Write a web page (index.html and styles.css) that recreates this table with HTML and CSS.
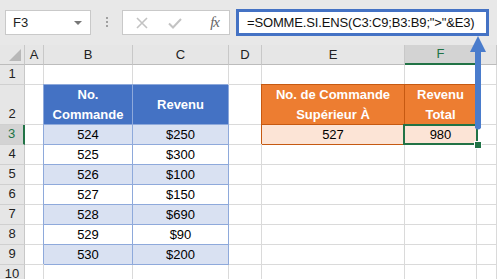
FILE: index.html
```html
<!DOCTYPE html>
<html>
<head>
<meta charset="utf-8">
<link rel="stylesheet" href="styles.css">
</head>
<body>
<div class="app">
  <div class="toolbar">
    <div class="namebox"><span class="nb-text">F3</span><span class="nb-arrow"></span></div>
    <div class="dots"><i></i><i></i><i></i></div>
    <div class="fxbox">
      <svg class="ico" width="14" height="14" viewBox="0 0 14 14"><path d="M2 2 L12 12 M12 2 L2 12" stroke="#c3c3c3" stroke-width="1.6" fill="none"/></svg>
      <svg class="ico" width="16" height="14" viewBox="0 0 16 14"><path d="M2 7.5 L6 11.5 L14 3" stroke="#c3c3c3" stroke-width="2" fill="none"/></svg>
      <span class="fx">fx</span>
    </div>
    <div class="formula">=SOMME.SI.ENS(C3:C9;B3:B9;"&gt;"&amp;E3)</div>
  </div>
  <div class="sheet">
    <div class="c h corner"><span class="tri"></span></div>
    <div class="c h">A</div><div class="c h">B</div><div class="c h">C</div><div class="c h">D</div><div class="c h">E</div><div class="c h hsel">F</div><div class="c h"></div>

    <div class="c rh">1</div><div class="c"></div><div class="c"></div><div class="c"></div><div class="c"></div><div class="c"></div><div class="c"></div><div class="c"></div>

    <div class="c rh">2</div><div class="c"></div>
    <div class="c bt bh">No.<br>Commande</div><div class="c bt bh">Revenu</div>
    <div class="c"></div>
    <div class="c ot oh">No. de Commande<br>Supérieur À</div><div class="c ot oh">Revenu<br>Total</div>
    <div class="c"></div>

    <div class="c rh rsel">3</div><div class="c"></div>
    <div class="c bt band">524</div><div class="c bt band">$250</div>
    <div class="c"></div>
    <div class="c ot ob">527</div><div class="c ot ob sel">980<span class="selbox"></span><span class="handle"></span></div>
    <div class="c"></div>

    <div class="c rh">4</div><div class="c"></div><div class="c bt">525</div><div class="c bt">$300</div><div class="c"></div><div class="c"></div><div class="c"></div><div class="c"></div>
    <div class="c rh">5</div><div class="c"></div><div class="c bt band">526</div><div class="c bt band">$100</div><div class="c"></div><div class="c"></div><div class="c"></div><div class="c"></div>
    <div class="c rh">6</div><div class="c"></div><div class="c bt">527</div><div class="c bt">$150</div><div class="c"></div><div class="c"></div><div class="c"></div><div class="c"></div>
    <div class="c rh">7</div><div class="c"></div><div class="c bt band">528</div><div class="c bt band">$690</div><div class="c"></div><div class="c"></div><div class="c"></div><div class="c"></div>
    <div class="c rh">8</div><div class="c"></div><div class="c bt">529</div><div class="c bt">$90</div><div class="c"></div><div class="c"></div><div class="c"></div><div class="c"></div>
    <div class="c rh">9</div><div class="c"></div><div class="c bt band">530</div><div class="c bt band">$200</div><div class="c"></div><div class="c"></div><div class="c"></div><div class="c"></div>
    <div class="c rh">10</div><div class="c"></div><div class="c"></div><div class="c"></div><div class="c"></div><div class="c"></div><div class="c"></div><div class="c"></div>
  </div>
  <svg class="arrow" width="20" height="96" viewBox="0 0 20 96">
    <path d="M10 0 L18 16 L13 16 L13 92 Q10 95 7 92 L7 16 L2 16 Z" fill="#4a7ccc"/>
  </svg>
</div>
</body>
</html>
```
FILE: styles.css
```css
* { box-sizing: border-box; }
html, body { margin: 0; padding: 0; }
body {
  width: 497px;
  height: 279px;
  overflow: hidden;
  background: #fff;
  font-family: "Liberation Sans", Arial, sans-serif;
  color: #000;
}
.app { position: relative; width: 497px; height: 279px; overflow: hidden; }

.toolbar {
  height: 45px;
  background: #e8e8e8;
  display: flex;
  align-items: flex-start;
  padding: 9px 0 0 5px;
}
.namebox {
  margin-top: 1px;
  width: 86px;
  height: 25px;
  background: #fff;
  border: 1px solid #c9c9c9;
  display: flex;
  align-items: center;
  justify-content: space-between;
  padding: 0 8px 0 7px;
  font-size: 13px;
  color: #222;
}
.nb-arrow {
  width: 0; height: 0;
  border-left: 4px solid transparent;
  border-right: 4px solid transparent;
  border-top: 4px solid #777;
}
.dots {
  width: 31px;
  height: 26px;
  display: flex;
  flex-direction: column;
  align-items: center;
  justify-content: center;
  gap: 2px;
}
.dots i { display: block; width: 2px; height: 2px; background: #a0a0a0; }
.fxbox {
  margin-top: 1px;
  width: 108px;
  height: 25px;
  background: #fff;
  border: 1px solid #c9c9c9;
  display: flex;
  align-items: center;
  padding: 0 10px 0 12px;
  gap: 18px;
}
.fxbox .ico { display: block; }
.fx {
  margin-left: auto;
  font-family: "Liberation Serif", "Times New Roman", serif;
  font-style: italic;
  font-size: 15px;
  color: #666;
  letter-spacing: -1px;
}
.formula {
  margin-left: 6px;
  width: 253px;
  height: 27px;
  background: #fff;
  border: 3px solid #4472c4;
  padding: 0 0 0 8px;
  font-size: 13px;
  letter-spacing: -0.15px;
  line-height: 21px;
  color: #111;
  white-space: nowrap;
}

.sheet {
  display: grid;
  grid-template-columns: 25px 19px 89px 96px 33px 143px 72px 20px;
  grid-template-rows: 20px 20px 40px repeat(8, 20px);
}
.c {
  border-right: 1px solid #dadada;
  border-bottom: 1px solid #dadada;
  display: flex;
  align-items: center;
  justify-content: center;
  text-align: center;
  font-size: 13px;
  line-height: 20px;
  position: relative;
}
.h {
  background: #e6e6e6;
  border-right: 1px solid #c8c8c8;
  border-bottom: 1px solid #bcbcbc;
  color: #222;
  font-size: 13px;
}
.hsel {
  background: #d3d3d3;
  color: #217346;
  border-bottom: 2px solid #217346;
}
.corner { justify-content: flex-end; align-items: flex-end; padding: 0 3px 3px 0; }
.tri {
  width: 0; height: 0;
  border-left: 12px solid transparent;
  border-bottom: 12px solid #b8b8b8;
}
.rh {
  background: #e6e6e6;
  border-right: 1px solid #c8c8c8;
  border-bottom: 1px solid #d0d0d0;
  color: #222;
  align-items: flex-end;
  padding-bottom: 0;
}
.rsel {
  background: #d3d3d3;
  color: #217346;
  border-right: 2px solid #217346;
}

.bt {
  border-right: 1px solid #8ea9db;
  border-bottom: 1px solid #8ea9db;
  box-shadow: -1px -1px 0 #8ea9db;
  color: #000;
}
.bh { background: #4472c4; color: #fff; font-weight: bold; }
.band { background: #d9e1f2; }

.ot {
  border-right: 1px solid #c65911;
  border-bottom: 1px solid #c65911;
  box-shadow: -1px -1px 0 #c65911;
}
.oh { background: #ed7d31; color: #fff; font-weight: bold; }
.ob { background: #fce4d6; }

.sel { z-index: 2; }
.selbox {
  position: absolute;
  left: -2px; top: -1px; right: -2px; bottom: -1px;
  border: 2px solid #217346;
}
.handle {
  position: absolute;
  right: -6px; bottom: -5px;
  width: 8px; height: 8px;
  background: #217346;
  border: 1px solid #fff;
}
.arrow {
  position: absolute;
  left: 468px;
  top: 36px;
  z-index: 3;
}
```
